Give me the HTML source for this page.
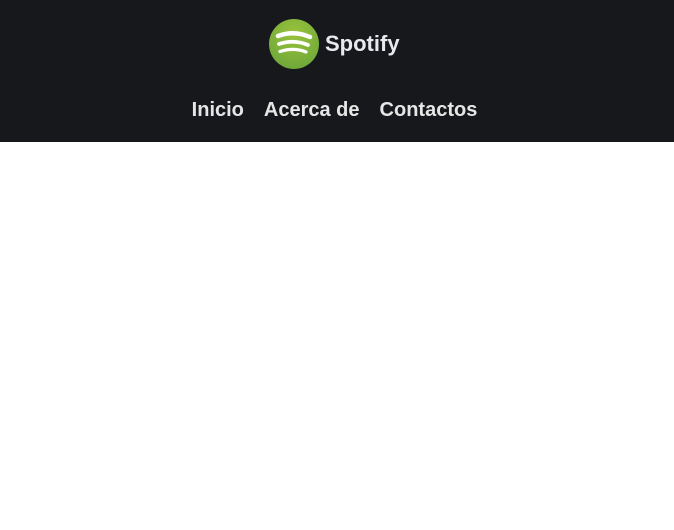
<!DOCTYPE html>
<html><head><meta charset="utf-8"><style>
html,body{margin:0;padding:0;width:674px;height:530px;background:#fff;overflow:hidden}
header{position:absolute;left:0;top:0;width:674px;height:142px;background:#16181b}
.logo{position:absolute;left:269px;top:19px;width:50px;height:50px}
.brand{position:absolute;left:325px;top:31px;font:bold 22px "Liberation Sans",sans-serif;color:#e8e8ee;line-height:26px}
nav{position:absolute;top:98px;left:0;width:669px;display:flex;justify-content:center;gap:20px;font:bold 20px "Liberation Sans",sans-serif;color:#e6e6e6;line-height:24px;padding-right:5px}
</style></head><body>
<header>
<svg class="logo" viewBox="0 0 50 50">
<defs><radialGradient id="g" cx="0.5" cy="0.3" r="0.7"><stop offset="0" stop-color="#9ac23c"/><stop offset="1" stop-color="#6fa83a"/></radialGradient></defs>
<circle cx="25" cy="25" r="25" fill="url(#g)"/>
<path d="M9 17 Q25 11 41 18" stroke="#fff" stroke-width="4.5" fill="none" stroke-linecap="round"/>
<path d="M10 25 Q25 20 39 26" stroke="#fff" stroke-width="3.8" fill="none" stroke-linecap="round"/>
<path d="M11 32.5 Q25 28 37 33" stroke="#fff" stroke-width="3.2" fill="none" stroke-linecap="round"/>
</svg>
<div class="brand">Spotify</div>
<nav><span>Inicio</span><span>Acerca de</span><span>Contactos</span></nav>
</header>
</body></html>
